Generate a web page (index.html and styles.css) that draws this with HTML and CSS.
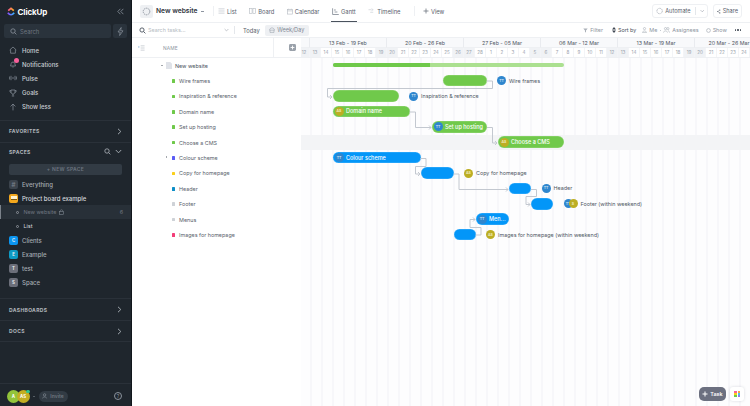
FILE: index.html
```html
<!DOCTYPE html>
<html lang="en">
<head>
  <meta charset="UTF-8" />
  <title>New website - Gantt</title>
  <link rel="stylesheet" href="styles.css">
</head>
<body>
  <div class="sidebar">
    <div class="logo-row">
      <svg class="logo" width="8" height="11" viewBox="0 0 10 12">
        <defs>
          <linearGradient id="lgTop" x1="0" x2="1"><stop offset="0" stop-color="#ff5a8a"/><stop offset="1" stop-color="#ffb020"/></linearGradient>
          <linearGradient id="lgBot" x1="0" x2="1"><stop offset="0" stop-color="#8a4dff"/><stop offset="1" stop-color="#35b8ff"/></linearGradient>
        </defs>
        <path d="M1.5 5 L5 2 L8.5 5" fill="none" stroke="url(#lgTop)" stroke-width="2.1"/>
        <path d="M1 7.6 Q5 12.6 9 7.6" fill="none" stroke="url(#lgBot)" stroke-width="2.1"/>
      </svg>
      <span class="logo-text">ClickUp</span>
      <svg class="collapse" width="7" height="7" viewBox="0 0 7 7"><path d="M3.4 .8 L.8 3.5 L3.4 6.2 M6.4 .8 L3.8 3.5 L6.4 6.2" fill="none" stroke="#8b939d" stroke-width=".8"/></svg>
    </div>
    <div class="search-row">
      <div class="side-search">
        <svg width="7" height="7" viewBox="0 0 7 7"><circle cx="3" cy="3" r="2.2" fill="none" stroke="#8b939d" stroke-width=".8"/><path d="M4.6 4.6 L6.4 6.4" stroke="#8b939d" stroke-width=".8"/></svg>
        <span>Search</span>
      </div>
      <div class="bolt"><svg width="7" height="9" viewBox="0 0 7 9"><path d="M4.2 .5 L1 5 H3.2 L2.6 8.5 L6 3.8 H3.7 Z" fill="none" stroke="#8b939d" stroke-width=".7"/></svg></div>
    </div>
    <nav class="nav">
      <a><svg width="8" height="8" viewBox="0 0 8 8"><path d="M.7 4 L4 1 L7.3 4 M1.6 3.6 V7.2 H6.4 V3.6" fill="none" stroke="#8b939d" stroke-width=".7"/></svg>Home</a>
      <a><span class="nav-ico"><svg width="8" height="8" viewBox="0 0 8 8"><path d="M1.5 6 C2.2 5 1.6 2 4 2 C6.4 2 5.8 5 6.5 6 Z M3.3 7 H4.7" fill="none" stroke="#8b939d" stroke-width=".7"/></svg><i class="dot-badge"></i></span>Notifications</a>
      <a><svg width="8" height="8" viewBox="0 0 8 8"><path d="M.6 2.5 V5.5 M2 1.8 V6.2 M6 1.8 V6.2 M7.4 2.5 V5.5 M3 4 H5" fill="none" stroke="#8b939d" stroke-width=".7"/></svg>Pulse</a>
      <a><svg width="8" height="8" viewBox="0 0 8 8"><path d="M2 1 H6 V3 C6 4.4 5 5 4 5 C3 5 2 4.4 2 3 Z M2 1.6 H.8 C.8 3 1.4 3.4 2.2 3.6 M6 1.6 H7.2 C7.2 3 6.6 3.4 5.8 3.6 M4 5 V6.6 M2.8 7 H5.2" fill="none" stroke="#8b939d" stroke-width=".7"/></svg>Goals</a>
      <a><svg width="8" height="8" viewBox="0 0 8 8"><path d="M4 7.4 V1 M1.6 3.4 L4 1 L6.4 3.4" fill="none" stroke="#8b939d" stroke-width=".7"/></svg>Show less</a>
    </nav>
    <div class="sec sec-fav"><span>FAVORITES</span><svg class="chev" width="5" height="7" viewBox="0 0 5 7"><path d="M1 .8 L3.8 3.5 L1 6.2" fill="none" stroke="#aeb4bb" stroke-width=".9"/></svg></div>
    <div class="sec-head">
      <span>SPACES</span>
      <span class="sec-tools">
        <svg width="7" height="7" viewBox="0 0 7 7"><circle cx="3" cy="3" r="2.2" fill="none" stroke="#aeb4bb" stroke-width=".8"/><path d="M4.6 4.6 L6.4 6.4" stroke="#aeb4bb" stroke-width=".8"/></svg>
        <svg width="7" height="5" viewBox="0 0 7 5"><path d="M.8 1 L3.5 3.8 L6.2 1" fill="none" stroke="#aeb4bb" stroke-width=".9"/></svg>
      </span>
    </div>
    <div class="new-space">+ NEW SPACE</div>
    <div class="spaces">
      <div class="space"><i class="tile t-grey">#</i>Everything</div>
      <div class="space strong"><i class="tile t-yellow"><b></b></i>Project board example</div>
      <div class="sub current"><i class="ring"></i><span>New website</span><svg width="5" height="6" viewBox="0 0 5 6"><rect x=".6" y="2.4" width="3.8" height="3" fill="none" stroke="#7d858f" stroke-width=".6"/><path d="M1.4 2.4 V1.6 C1.4 .4 3.6 .4 3.6 1.6 V2.4" fill="none" stroke="#7d858f" stroke-width=".6"/></svg><em>6</em></div>
      <div class="sub list"><i class="ring"></i><span>List</span></div>
      <div class="space"><i class="tile t-blue">C</i>Clients</div>
      <div class="space"><i class="tile t-cyan">E</i>Example</div>
      <div class="space"><i class="tile t-mid">T</i>test</div>
      <div class="space"><i class="tile t-mid">S</i>Space</div>
    </div>
    <div class="sec sec-dash"><span>DASHBOARDS</span><svg class="chev" width="5" height="7" viewBox="0 0 5 7"><path d="M1 .8 L3.8 3.5 L1 6.2" fill="none" stroke="#aeb4bb" stroke-width=".9"/></svg></div>
    <div class="sec sec-docs"><span>DOCS</span><svg class="chev" width="5" height="7" viewBox="0 0 5 7"><path d="M1 .8 L3.8 3.5 L1 6.2" fill="none" stroke="#aeb4bb" stroke-width=".9"/></svg></div>
    <div class="side-foot">
      <div class="people">
        <i class="person p-a">A</i><i class="person p-s">AS</i><i class="online"></i>
      </div>
      <i class="caret"></i>
      <div class="invite"><svg width="6" height="6" viewBox="0 0 6 6"><circle cx="2.6" cy="1.9" r="1.2" fill="none" stroke="#8b939d" stroke-width=".6"/><path d="M.6 5.4 C.8 3.4 4.4 3.4 4.6 5.4" fill="none" stroke="#8b939d" stroke-width=".6"/></svg>Invite</div>
      <div class="help">?</div>
    </div>
  </div>

  <div class="main">
    <div class="topbar">
      <div class="project-ico"><svg width="9" height="9" viewBox="0 0 9 9"><circle cx="4.5" cy="4.5" r="3.3" fill="none" stroke="#7d8590" stroke-width=".8" stroke-dasharray="1.4 .7"/></svg></div>
      <div class="project-name">New website</div>
      <i class="mini-caret"></i>
      <div class="tabs">
        <a class="tab"><svg width="7" height="6" viewBox="0 0 8 7"><path d="M.5 1 H7.5 M.5 3.5 H7.5 M.5 6 H7.5" stroke="#c5cad0" stroke-width=".9"/></svg>List</a>
        <a class="tab"><svg width="7" height="6" viewBox="0 0 8 7"><rect x=".5" y=".5" width="3" height="6" fill="none" stroke="#b3b9c0" stroke-width=".7"/><rect x="4.5" y=".5" width="3" height="6" fill="none" stroke="#b3b9c0" stroke-width=".7"/></svg>Board</a>
        <a class="tab"><svg width="6" height="7" viewBox="0 0 7 7"><rect x=".5" y="1" width="6" height="5.5" fill="none" stroke="#b3b9c0" stroke-width=".7"/><path d="M.5 2.8 H6.5 M2 .2 V1.4 M5 .2 V1.4" stroke="#b3b9c0" stroke-width=".7"/></svg>Calendar</a>
        <a class="tab active"><svg width="7" height="7" viewBox="0 0 7 7"><path d="M.6 .3 V6.5 H6.8 M2 2 H3.8 M2.6 4 H5.4" fill="none" stroke="#7d8590" stroke-width=".8"/></svg>Gantt</a>
        <a class="tab"><svg width="7" height="6" viewBox="0 0 8 7"><path d="M.5 2 H4 M2.5 5 H6 M4 .8 L6 2 L4 3.2" fill="none" stroke="#c5cad0" stroke-width=".7"/></svg>Timeline</a>
        <a class="tab add-view"><svg width="6" height="6" viewBox="0 0 6 6"><path d="M3 .5 V5.5 M.5 3 H5.5" stroke="#6f7782" stroke-width=".8"/></svg>View</a>
      </div>
      <div class="top-actions">
        <div class="automate"><svg width="8" height="8" viewBox="0 0 8 8"><circle cx="4" cy="4" r="3" fill="none" stroke="#8d95a0" stroke-width=".7" stroke-dasharray="1.2 .6"/></svg><span>Automate</span><i class="split"></i><svg width="5" height="4" viewBox="0 0 5 4"><path d="M.6 1 L2.5 2.9 L4.4 1" fill="none" stroke="#8d95a0" stroke-width=".6"/></svg></div>
        <div class="share"><svg width="6" height="7" viewBox="0 0 6 7"><path d="M4.6 1.2 L1.2 3.5 L4.6 5.8" fill="none" stroke="#59616c" stroke-width=".6"/><circle cx="4.6" cy="1.2" r=".9" fill="#59616c"/><circle cx="1.2" cy="3.5" r=".9" fill="#59616c"/><circle cx="4.6" cy="5.8" r=".9" fill="#59616c"/></svg>Share</div>
      </div>
    </div>

    <div class="toolbar">
      <svg class="tb-search" width="7" height="7" viewBox="0 0 7 7"><circle cx="3" cy="3" r="2.1" fill="none" stroke="#4a525d" stroke-width=".9"/><path d="M4.6 4.6 L6.4 6.4" stroke="#4a525d" stroke-width=".9"/></svg>
      <span class="tb-placeholder">Search tasks...</span>
      <svg class="tb-chev" width="5" height="4" viewBox="0 0 5 4"><path d="M.6 1 L2.5 2.9 L4.4 1" fill="none" stroke="#9aa1aa" stroke-width=".6"/></svg>
      <i class="tb-sep"></i>
      <span class="today">Today</span>
      <div class="week-pill"><svg width="6" height="6" viewBox="0 0 6 6"><path d="M.6 3 C1 .2 5 .2 5.4 3 M.4 3.2 H5.6 M1 3.2 V5.4 H5 V3.2" fill="none" stroke="#8d95a0" stroke-width=".5"/></svg>Week/Day</div>
      <div class="tb-right">
        <span class="tb-item"><svg width="5" height="5" viewBox="0 0 5 5"><path d="M.3 .6 H4.7 L3 2.6 V4.6 L2 4 V2.6 Z" fill="#aab0b8"/></svg>Filter</span>
        <span class="tb-item dark"><svg width="4" height="6" viewBox="0 0 4 6"><path d="M2 0 L4 2.6 H0 Z M2 6 L0 3.4 H4 Z" fill="#3f4752"/></svg>Sort by</span>
        <span class="tb-item"><svg width="5" height="6" viewBox="0 0 5 6"><circle cx="2.5" cy="1.6" r="1.1" fill="none" stroke="#aab0b8" stroke-width=".6"/><path d="M.5 5.6 C.6 3.4 4.4 3.4 4.5 5.6 Z" fill="none" stroke="#aab0b8" stroke-width=".6"/></svg>Me</span>
        <i class="tb-mid-dot"></i>
        <span class="tb-item"><svg width="7" height="6" viewBox="0 0 7 6"><circle cx="2.5" cy="1.6" r="1.1" fill="none" stroke="#aab0b8" stroke-width=".6"/><circle cx="4.9" cy="1.6" r="1.1" fill="none" stroke="#aab0b8" stroke-width=".6"/><path d="M.5 5.6 C.6 3.4 4.4 3.4 4.5 5.6 M5 3.6 C5.8 3.8 6.4 4.4 6.5 5.6" fill="none" stroke="#aab0b8" stroke-width=".6"/></svg>Assignees</span>
        <span class="tb-item"><svg width="5" height="5" viewBox="0 0 5 5"><circle cx="2.5" cy="2.5" r="1.9" fill="none" stroke="#aab0b8" stroke-width=".7"/></svg>Show</span>
        <span class="tb-dots"><i></i><i></i><i></i></span>
      </div>
    </div>

    <div class="gantt">
      <div class="tree">
        <div class="tree-head">
          <svg class="tree-toggle" width="7" height="6" viewBox="0 0 8 7"><path d="M3 1 H7.6 M3 3.5 H7.6 M3 6 H7.6" stroke="#b9bfc6" stroke-width=".8"/><path d="M.4 .8 L2 2.2 L.4 3.6 Z" fill="#8fb8dc"/></svg>
          <span class="name-col">NAME</span>
          <div class="add-col"><svg width="7" height="7" viewBox="0 0 7 7"><rect width="7" height="7" rx="1.4" fill="#9aa1aa"/><path d="M3.5 1.6 V5.4 M1.6 3.5 H5.4" stroke="#fff" stroke-width=".9"/></svg></div>
        </div>
        <div class="tree-row list-row"><i class="tw down"></i><svg width="6" height="7" viewBox="0 0 6 7"><path d="M0 0 H4.2 L6 1.8 V7 H0 Z" fill="#dfe2e8"/></svg><span>New website</span></div>
        <div class="tree-row"><i class="sq green"></i><span>Wire frames</span></div>
        <div class="tree-row"><i class="sq green"></i><span>Inspiration &amp; reference</span></div>
        <div class="tree-row"><i class="sq green"></i><span>Domain name</span></div>
        <div class="tree-row"><i class="sq green"></i><span>Set up hosting</span></div>
        <div class="tree-row"><i class="sq green"></i><span>Choose a CMS</span></div>
        <div class="tree-row"><i class="tw right"></i><i class="sq violet"></i><span>Colour scheme</span></div>
        <div class="tree-row"><i class="sq yellow"></i><span>Copy for homepage</span></div>
        <div class="tree-row"><i class="sq teal"></i><span>Header</span></div>
        <div class="tree-row"><i class="sq silver"></i><span>Footer</span></div>
        <div class="tree-row"><i class="sq silver"></i><span>Menus</span></div>
        <div class="tree-row"><i class="sq pink"></i><span>Images for homepage</span></div>
      </div>

      <div class="timeline">
        <div class="weeks">
          <div class="week wk-first"></div>
          <div class="week">13 Feb - 19 Feb</div>
          <div class="week">20 Feb - 26 Feb</div>
          <div class="week">27 Feb - 05 Mar</div>
          <div class="week">06 Mar - 12 Mar</div>
          <div class="week">13 Mar - 19 Mar</div>
          <div class="week wk-last">20 Mar - 26 Mar</div>
        </div>
        <div class="days">
          <span class="off">12</span><span class="off">13</span><span>14</span><span>15</span><span>16</span><span>17</span><span>18</span><span class="off">19</span><span class="off">20</span><span>21</span><span>22</span><span>23</span><span>24</span><span>25</span><span class="off">26</span><span class="off">27</span><span>28</span><span>1</span><span>2</span><span>3</span><span>4</span><span class="off">5</span><span class="off">6</span><span>7</span><span>8</span><span>9</span><span>10</span><span>11</span><span class="off">12</span><span class="off">13</span><span>14</span><span>15</span><span>16</span><span>17</span><span>18</span><span class="off">19</span><span class="off">20</span><span>21</span><span>22</span><span>23</span><span>24</span>
        </div>
        <div class="canvas">
          <div class="g-row"><div class="summary" style="margin-left:32px;width:230.5px"><i style="width:42%"></i></div></div>
          <div class="g-row"><div class="bar green" style="margin-left:142px;width:43.5px"></div><i class="av tt first">TT</i><span class="g-label">Wire frames</span></div>
          <div class="g-row"><div class="bar green" style="margin-left:32px;width:65.5px"></div><i class="av tt first">TT</i><span class="g-label">Inspiration &amp; reference</span></div>
          <div class="g-row"><div class="bar green" style="margin-left:32px;width:76.5px"><i class="av as">AS</i><span>Domain name</span></div></div>
          <div class="g-row"><div class="bar green" style="margin-left:131px;width:55px"><i class="av tt">TT</i><span>Set up hosting</span></div></div>
          <div class="g-row today-row"><div class="bar green" style="margin-left:197px;width:65.5px"><i class="av as">AS</i><span>Choose a CMS</span></div></div>
          <div class="g-row"><div class="bar blue" style="margin-left:32px;width:87.5px"><i class="av tt">TT</i><span>Colour scheme</span></div></div>
          <div class="g-row"><div class="bar blue" style="margin-left:120px;width:32.5px"></div><i class="av as first">AS</i><span class="g-label">Copy for homepage</span></div>
          <div class="g-row"><div class="bar blue" style="margin-left:208px;width:22px"></div><i class="av tt first">TT</i><span class="g-label">Header</span></div>
          <div class="g-row"><div class="bar blue" style="margin-left:230px;width:22px"></div><i class="av tt first">TT</i><i class="av as overlap">S</i><span class="g-label">Footer (within weekend)</span></div>
          <div class="g-row"><div class="bar blue" style="margin-left:175px;width:32.5px"><i class="av tt">TT</i><span>Men...</span></div></div>
          <div class="g-row"><div class="bar blue" style="margin-left:152.5px;width:22px"></div><i class="av as first">AS</i><span class="g-label">Images for homepage (within weekend)</span></div>
          <svg class="links" width="449" height="348" viewBox="301 58 449 348">
            <g fill="none" stroke="#c3c8d0" stroke-width="1">
              <path d="M486.5 81 H492.5 V88.5 H327.5 V97 H332 l-2 -2 m2 2 l-2 2"/>
              <path d="M409.5 112 H415.5 V127.5 H431 l-2 -2 m2 2 l-2 2"/>
              <path d="M487 127.5 H492.5 V143 H497 l-2 -2 m2 2 l-2 2"/>
              <path d="M420.5 158.5 H426 V166.5 H415.5 V174 H420 l-2 -2 m2 2 l-2 2"/>
              <path d="M453.5 174 H459 V189.5 H508 l-2 -2 m2 2 l-2 2"/>
              <path d="M531 189.5 H536.5 V196.5 H526 V204.5 H530 l-2 -2 m2 2 l-2 2"/>
              <path d="M475.5 235 H481 V227.5 H470 V219.5 H475 l-2 -2 m2 2 l-2 2"/>
            </g>
          </svg>
        </div>
        <div class="fab-row">
          <div class="task-btn"><svg width="6" height="6" viewBox="0 0 6 6"><path d="M3 .5 V5.5 M.5 3 H5.5" stroke="#fff" stroke-width="1"/></svg>Task</div>
          <div class="apps"><i class="c1"></i><i class="c2"></i><i class="c3"></i><i class="c4"></i><i class="c5"></i><i class="c6"></i></div>
        </div>
      </div>
    </div>
  </div>
</body>
</html>
```
FILE: styles.css
```css
* {
  box-sizing: border-box;
}
html, body {
  height: 100%;
}
body {
  margin: 0;
  display: flex;
  height: 406px;
  overflow: hidden;
  font-family: Inter, "Noto Sans", sans-serif;
  background: #fff;
  color: #4f5764;
  font-size: 6px;
}
i, em {
  font-style: normal;
}

/* sidebar */
.sidebar {
  width: 132px;
  flex: none;
  background: #1f262d;
  border-right: 1px solid #11161b;
  color: #d5d9dd;
  display: flex;
  flex-direction: column;
}
.logo-row {
  height: 23px;
  padding: 0 7px 0 7px;
  display: flex;
  align-items: center;
  gap: 2.5px;
}
.logo-text {
  font-size: 8px;
  font-weight: 700;
  color: #fff;
  letter-spacing: -.1px;
}
.collapse {
  margin-left: auto;
}
.search-row {
  display: flex;
  gap: 2px;
  padding: 1px 4px 0;
  height: 16px;
}
.side-search {
  flex: 1;
  height: 14px;
  background: #2a333c;
  border-radius: 2px;
  display: flex;
  align-items: center;
  gap: 3px;
  padding-left: 6px;
  color: #6e7680;
  font-size: 5.8px;
}
.bolt {
  width: 14px;
  height: 14px;
  background: #2a333c;
  border-radius: 2px;
  display: flex;
  align-items: center;
  justify-content: center;
}
.nav {
  display: flex;
  flex-direction: column;
  padding: 4px 0 0 9px;
}
.nav a {
  height: 14.2px;
  display: flex;
  align-items: center;
  gap: 5px;
  font-size: 6px;
  font-weight: 500;
  color: #c9ced3;
}
.nav-ico {
  position: relative;
  display: flex;
}
.dot-badge {
  position: absolute;
  top: -2px;
  right: -2px;
  width: 5px;
  height: 5px;
  border-radius: 50%;
  background: #f7609b;
}
.sec {
  display: flex;
  align-items: center;
  justify-content: space-between;
  padding: 0 9px;
  font-size: 5px;
  font-weight: 700;
  letter-spacing: .35px;
  color: #b3b8be;
  border-top: 1px solid #2a3139;
}
.sec-fav {
  margin-top: 6px;
  height: 23px;
  border-bottom: 1px solid #2a3139;
}
.sec-head {
  display: flex;
  align-items: center;
  justify-content: space-between;
  padding: 0 9px;
  height: 18px;
  font-size: 5px;
  font-weight: 700;
  letter-spacing: .35px;
  color: #b3b8be;
}
.sec-tools {
  display: flex;
  align-items: center;
  gap: 4px;
}
.new-space {
  margin: 3px 9px 0;
  height: 11px;
  background: #323b44;
  border-radius: 2px;
  text-align: center;
  line-height: 11px;
  font-size: 5px;
  font-weight: 600;
  letter-spacing: .3px;
  color: #6d7580;
}
.spaces {
  margin-top: 2px;
  display: flex;
  flex-direction: column;
}
.space {
  height: 14.15px;
  display: flex;
  align-items: center;
  gap: 4px;
  padding-left: 9px;
  font-size: 6px;
  font-weight: 500;
  color: #a5abb2;
}
.space.strong {
  color: #d5d9dd;
}
.tile {
  width: 9px;
  height: 9px;
  border-radius: 2px;
  display: flex;
  align-items: center;
  justify-content: center;
  font-size: 4.4px;
  font-weight: 700;
  color: #e9ecef;
}
.t-grey { background: #3c444d; color: #6e7680; font-size: 6px; }
.t-yellow { background: #f4a81d; }
.t-yellow b { width: 6px; height: 4px; background: #fff3cf; border-bottom: 1px solid #7d5a10; }
.t-blue { background: #0b95f0; }
.t-cyan { background: #0e9ac4; }
.t-mid { background: #6c6f7a; }
.sub {
  height: 14.15px;
  display: flex;
  align-items: center;
  gap: 3px;
  padding-left: 16px;
  font-size: 5.4px;
  color: #d5d9dd;
}
.sub.current {
  background: #283038;
  border-left: 1px solid #7b828a;
  padding-left: 15px;
  color: #6f7680;
}
.sub em {
  margin-left: auto;
  margin-right: 8px;
  color: #6f7680;
}
.ring {
  width: 3px;
  height: 3px;
  border: .7px solid #8a9098;
  border-radius: 50%;
  margin-right: 1.5px;
}
.sec-dash {
  margin-top: 8px;
  height: 22px;
}
.sec-docs {
  height: 22px;
  border-bottom: 1px solid #2a3139;
}
.side-foot {
  margin-top: auto;
  height: 23px;
  border-top: 1px solid #2a3139;
  display: flex;
  align-items: center;
  padding: 2px 9px 0 7px;
}
.people {
  position: relative;
  display: flex;
}
.person {
  width: 13px;
  height: 13px;
  border-radius: 50%;
  display: flex;
  align-items: center;
  justify-content: center;
  font-size: 4.4px;
  font-weight: 700;
  color: #fff;
}
.p-a { background: #93c43b; }
.p-s { background: #c2ae23; margin-left: -3.5px; }
.online {
  position: absolute;
  top: 0;
  right: 0;
  width: 3.4px;
  height: 3.4px;
  border-radius: 50%;
  background: #2fc48d;
}
.caret {
  margin-left: 3px;
  border: 1.4px solid transparent;
  border-top-color: #8b939d;
  margin-top: 1px;
}
.invite {
  margin-left: 4px;
  width: 29px;
  height: 11px;
  border-radius: 5.5px;
  background: #323b44;
  display: flex;
  align-items: center;
  justify-content: center;
  gap: 2px;
  font-size: 5px;
  font-weight: 600;
  color: #6e7680;
}
.help {
  margin-left: auto;
  width: 8px;
  height: 8px;
  border: .8px solid #8b939d;
  border-radius: 50%;
  font-size: 5px;
  line-height: 6.5px;
  text-align: center;
  color: #8b939d;
}

/* top bars */
.main {
  flex: 1;
  min-width: 0;
  display: flex;
  flex-direction: column;
}
.topbar {
  height: 23px;
  flex: none;
  display: flex;
  align-items: center;
  padding-left: 8px;
  border-bottom: 1px solid #eef0f3;
}
.project-ico {
  width: 13px;
  height: 13px;
  background: #eef0f3;
  border-radius: 2px;
  display: flex;
  align-items: center;
  justify-content: center;
}
.project-name {
  margin-left: 3px;
  width: 45px;
  font-size: 6.7px;
  font-weight: 600;
  color: #2f3640;
  white-space: nowrap;
}
.mini-caret {
  margin: 1px 0 0 0;
  width: 2.5px;
  height: 1px;
  background: #8d95a0;
}
.tabs {
  margin-left: 9px;
  padding-left: 4.5px;
  display: flex;
  height: 10px;
  align-items: center;
  gap: 12.5px;
  border-left: 1px solid #eef0f3;
}
.tab {
  position: relative;
  height: 100%;
  display: flex;
  align-items: center;
  gap: 2px;
  font-size: 5.8px;
  color: #59616c;
  white-space: nowrap;
}
.tab.active::after {
  content: "";
  position: absolute;
  left: -1px;
  right: -1px;
  bottom: -6px;
  height: 1px;
  background: #4a525d;
}
.add-view {
  margin-left: 1px;
  padding-left: 8px;
  border-left: 1px solid #eef0f3;
}
.top-actions {
  margin-left: auto;
  margin-right: 8px;
  display: flex;
  gap: 5px;
}
.automate, .share {
  height: 14px;
  border: 1px solid #eef0f3;
  border-radius: 3px;
  display: flex;
  align-items: center;
  gap: 2px;
  padding: 0 3px;
  font-size: 5.6px;
  color: #59616c;
}
.automate {
  width: 56px;
}
.share {
  width: 29px;
  justify-content: center;
}
.split {
  width: 1px;
  height: 8px;
  background: #e4e7eb;
  margin: 0 2px;
}
.toolbar {
  height: 15px;
  flex: none;
  display: flex;
  align-items: center;
  padding-left: 7px;
  border-bottom: 1px solid #eef0f3;
}
.tb-placeholder {
  margin-left: 2px;
  width: 75px;
  font-size: 5.4px;
  color: #b6bcc3;
}
.tb-chev {
  margin-left: 1px;
}
.tb-sep {
  margin-left: 5px;
  width: 1px;
  height: 8px;
  background: #e4e7eb;
}
.today {
  margin-left: 8px;
  font-size: 5.8px;
  color: #59616c;
}
.week-pill {
  margin-left: 5px;
  width: 44px;
  height: 11px;
  background: #eef0f3;
  border-radius: 2px;
  display: flex;
  align-items: center;
  justify-content: center;
  gap: 2px;
  font-size: 5.6px;
  color: #828a95;
}
.tb-right {
  margin-left: auto;
  margin-right: 9px;
  display: flex;
  align-items: center;
  gap: 7px;
}
.tb-item {
  display: flex;
  align-items: center;
  gap: 2px;
  font-size: 5.4px;
  color: #8d95a0;
}
.tb-item.dark {
  color: #4a525d;
  margin: 0 -1px 0 2px;
}
.tb-mid-dot {
  width: 1px;
  height: 1px;
  margin: 0 -4.5px;
  background: #c5cad0;
}
.tb-dots {
  display: flex;
  gap: 1px;
  margin-left: 1px;
}
.tb-dots i {
  width: 1.4px;
  height: 1.4px;
  border-radius: 50%;
  background: #4a525d;
}

/* tree */
.gantt {
  flex: 1;
  min-height: 0;
  display: flex;
}
.tree {
  width: 169px;
  flex: none;
}
.tree-head {
  height: 20px;
  display: flex;
  align-items: center;
  border-bottom: 1px solid #eef0f3;
  padding-left: 6px;
}
.name-col {
  margin-left: 18px;
  font-size: 4.8px;
  letter-spacing: .2px;
  color: #8d95a0;
}
.add-col {
  margin-left: auto;
  width: 28px;
  height: 100%;
  border-left: 1px solid #eef0f3;
  display: flex;
  align-items: center;
  justify-content: flex-end;
  padding-right: 5px;
}
.tree-row {
  position: relative;
  height: 15.4px;
  display: flex;
  align-items: center;
  padding-left: 39.5px;
  gap: 2.5px;
  font-size: 5.4px;
  color: #59616c;
}
.list-row {
  padding-left: 34px;
  gap: 3px;
  color: #4a525d;
}
.sq {
  width: 3.6px;
  height: 3.6px;
  border-radius: .6px;
  margin-right: 1.5px;
}
.sq.green { background: #6fc94a; }
.sq.violet { background: #5b5cf5; }
.sq.yellow { background: #fbcf1a; }
.sq.teal { background: #0d8ec7; }
.sq.silver { background: #ced2d7; }
.sq.pink { background: #f33d78; }
.tw {
  position: absolute;
  width: 0;
  height: 0;
  border: 1.5px solid transparent;
}
.tw.down {
  left: 29px;
  top: 7px;
  border-top-color: #4a525d;
  border-bottom-width: 0;
}
.tw.right {
  left: 34px;
  top: 6px;
  border-left-color: #4a525d;
  border-right-width: 0;
}

/* timeline */
.timeline {
  position: relative;
  flex: 1;
  min-width: 0;
  display: flex;
  flex-direction: column;
  overflow: hidden;
  background: #f8f9fb;
}
.weeks {
  height: 10px;
  flex: none;
  display: flex;
  margin-left: -2px;
}
.week {
  width: 77px;
  flex: none;
  border-right: 1px solid #e9ebef;
  border-bottom: 1px solid #eef0f3;
  text-align: center;
  line-height: 10px;
  font-size: 5.3px;
  color: #4f5764;
  white-space: nowrap;
}
.wk-first {
  width: 11px;
}
.wk-last {
  width: 54.5px;
  border-right: 0;
  text-align: right;
}
.days {
  height: 9.6px;
  flex: none;
  display: flex;
  margin-left: -2px;
  background: #fff;
  border-bottom: 1px solid #eef0f3;
}
.days span {
  width: 11px;
  flex: none;
  text-align: center;
  line-height: 9px;
  font-size: 4.6px;
  color: #9ba2ab;
  border-right: 1px solid #f3f4f7;
}
.days .off {
  background: #f0f2f5;
}
.canvas {
  position: relative;
  flex: 1;
  background-color: #fdfdfe;
  background-image: linear-gradient(to right, #f0f1f5 1px, transparent 1px);
  background-size: 11px 100%;
  background-position: 9.5px 0;
}
.g-row {
  height: 15.4px;
  display: flex;
  align-items: center;
}
.today-row {
  background: #f3f4f6;
}
.summary {
  height: 3.6px;
  border-radius: 2px;
  background: #abe090;
  overflow: hidden;
  display: flex;
}
.summary i {
  background: #6fc94a;
}
.bar {
  height: 11.6px;
  border-radius: 6px;
  display: flex;
  align-items: center;
  gap: 2.5px;
  padding-left: 1.5px;
  font-size: 5.5px;
  font-weight: 500;
  color: #fff;
  white-space: nowrap;
  overflow: hidden;
  flex: none;
  box-shadow: inset 0 0 0 .5px rgba(255,255,255,.25);
}
.bar.green { background: #70c94b; }
.bar.blue { background: #0396f8; }
.av {
  width: 9px;
  height: 9px;
  flex: none;
  border-radius: 50%;
  display: flex;
  align-items: center;
  justify-content: center;
  font-size: 3.6px;
  font-weight: 600;
  color: #d6e6f4;
}
.av.tt { background: #2f86ce; }
.av.as { background: #bcae23; color: #f2eecb; }
.av.first { margin-left: 10.5px; }
.av.overlap { margin-left: -4px; }
.g-label {
  margin-left: 3px;
  font-size: 5.4px;
  color: #4f5764;
  white-space: nowrap;
}
.links {
  position: absolute;
  left: 0;
  top: .4px;
  pointer-events: none;
}
.fab-row {
  position: absolute;
  right: 6px;
  bottom: 5px;
  display: flex;
  align-items: center;
  gap: 4px;
}
.task-btn {
  width: 27px;
  height: 14px;
  border-radius: 5px;
  background: #6c7080;
  display: flex;
  align-items: center;
  justify-content: center;
  gap: 2px;
  font-size: 5.4px;
  font-weight: 600;
  color: #fff;
}
.apps {
  width: 14px;
  height: 14px;
  border-radius: 3px;
  background: #fff;
  box-shadow: 0 0 3px rgba(60,70,90,.2);
  display: grid;
  grid-template-columns: repeat(2, 2.4px);
  grid-auto-rows: 1.8px;
  gap: .5px 1px;
  align-content: center;
  justify-content: center;
}
.apps .c1 { background: #f7609b; }
.apps .c2 { background: #f7a14a; }
.apps .c3 { background: #fbcf1a; }
.apps .c4 { background: #47c4e8; }
.apps .c5 { background: #70c94b; }
.apps .c6 { background: #8f7cf0; }
```
